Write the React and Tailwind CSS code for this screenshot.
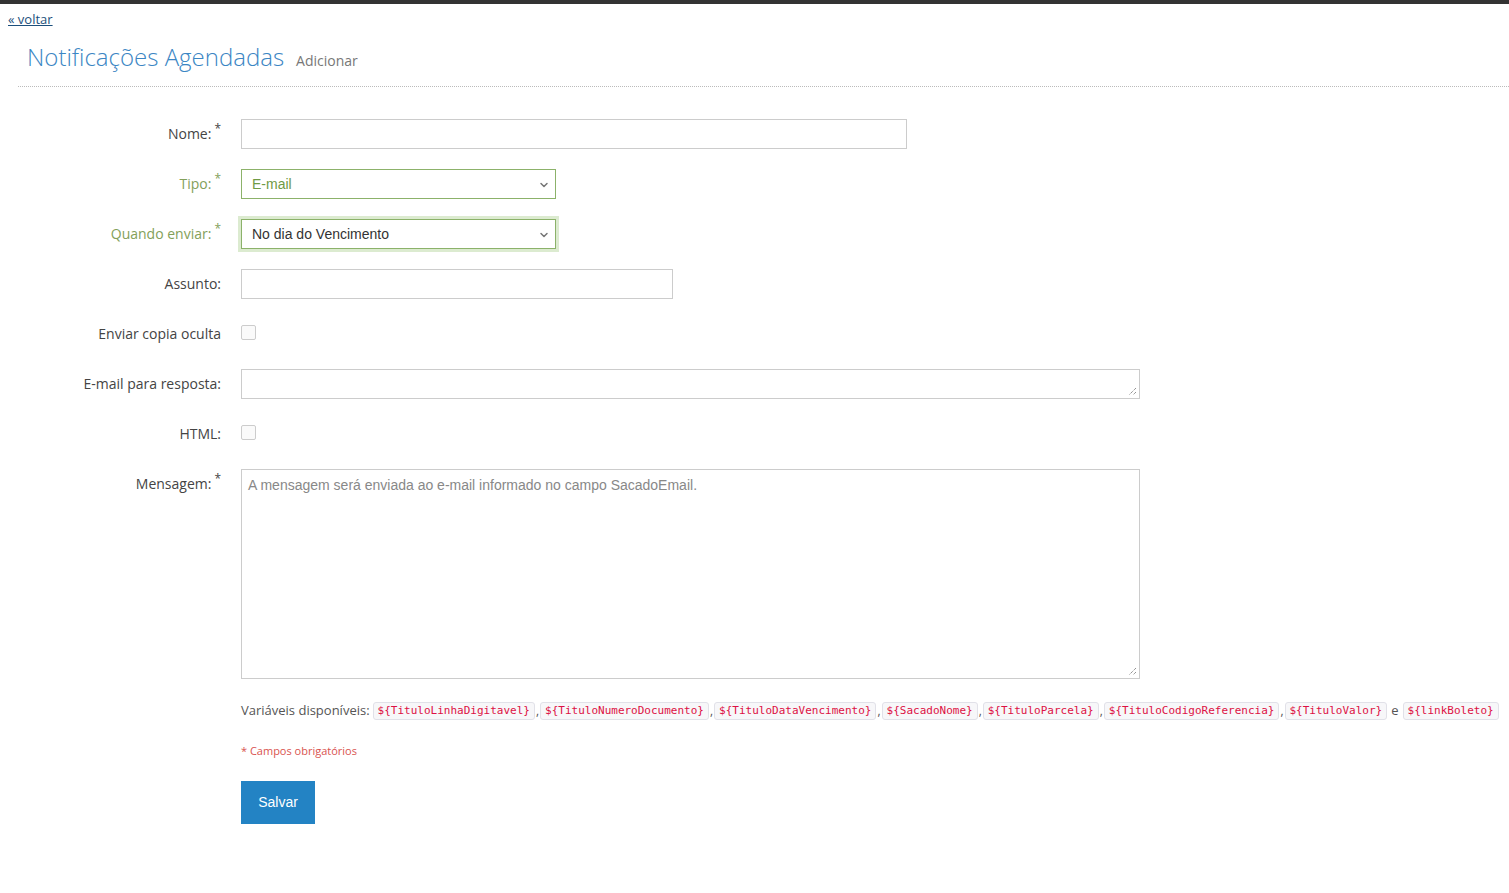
import { ChevronDown } from "lucide-react";

const vars = [
    "${TituloLinhaDigitavel}",
    "${TituloNumeroDocumento}",
    "${TituloDataVencimento}",
    "${SacadoNome}",
    "${TituloParcela}",
    "${TituloCodigoReferencia}",
    "${TituloValor}",
];

function Label({ children, required, green }) {
    return (
        <div
            className={`w-[221px] h-[30px] shrink-0 text-right text-[14px] leading-[30px] ${
                green ? "text-[#83a05a]" : "text-[#444]"
            }`}
        >
            {children}
            {required && (
                <span className="relative -top-[6px] ml-[3px] text-[12px] leading-none">*</span>
            )}
        </div>
    );
}

function Code({ children }) {
    return (
        <code className="inline-block h-[18px] px-[4px] leading-[16px] text-[11px] text-[#dd1144] bg-[#f7f7f9] border border-[#e1e1e8] rounded-[3px] font-['DejaVu_Sans_Mono',monospace]">
            {children}
        </code>
    );
}

function Select({ value, glow, greenText }) {
    return (
        <div
            className={`relative w-[315px] h-[30px] border border-[#8cb26a] bg-white flex items-center px-[10px] text-[14px] font-['Liberation_Sans',Arial,sans-serif] ${
                glow ? "shadow-[0_0_0_3px_#dcebd0]" : ""
            } ${greenText ? "text-[#6f9a45]" : "text-[#333]"}`}
        >
            {value}
            <ChevronDown
                className="absolute right-[5px] top-[9px] w-[12px] h-[12px] text-[#777]"
                strokeWidth={3}
            />
        </div>
    );
}

function Resize() {
    return (
        <svg className="absolute right-[2px] bottom-[2px]" width="9" height="9" viewBox="0 0 9 9">
            <path d="M8 1L1 8M8 5L5 8" stroke="#666" strokeWidth="1" strokeDasharray="1 1" />
        </svg>
    );
}

function Checkbox() {
    return (
        <div className="pt-[6px]">
            <div className="w-[15px] h-[15px] border border-[#ccc] rounded-[2px] bg-[#fafafa]"></div>
        </div>
    );
}

export default function App() {
    return (
        <div className="min-h-[893px] bg-white font-['Open_Sans',sans-serif]">
            <div className="h-[4px] bg-[#333]"></div>
            <div className="pl-[8px] pt-[2px]">
                <a href="#" className="text-[13px] text-[#1c4f7c] underline leading-[18px]">
                    « voltar
                </a>
            </div>
            <div className="ml-[18px] pl-[9px] pt-[7px] pb-[9px] border-b border-dotted border-[#bbb] flex items-baseline gap-[12px]">
                <h1 className="text-[24px] font-light text-[#3b86c4] leading-[40px]">
                    Notificações Agendadas
                </h1>
                <span className="text-[14px] text-[#777]">Adicionar</span>
            </div>

            <div className="pt-[32px] flex flex-col gap-[20px]">
                <div className="flex gap-[20px]">
                    <Label required>Nome:</Label>
                    <div className="w-[666px] h-[30px] border border-[#ccc]"></div>
                </div>
                <div className="flex gap-[20px]">
                    <Label required green>Tipo:</Label>
                    <Select value="E-mail" greenText />
                </div>
                <div className="flex gap-[20px]">
                    <Label required green>Quando enviar:</Label>
                    <Select value="No dia do Vencimento" glow />
                </div>
                <div className="flex gap-[20px]">
                    <Label>Assunto:</Label>
                    <div className="w-[432px] h-[30px] border border-[#ccc]"></div>
                </div>
                <div className="flex gap-[20px]">
                    <Label>Enviar copia oculta</Label>
                    <Checkbox />
                </div>
                <div className="flex gap-[20px]">
                    <Label>E-mail para resposta:</Label>
                    <div className="relative w-[899px] h-[30px] border border-[#ccc]">
                        <Resize />
                    </div>
                </div>
                <div className="flex gap-[20px]">
                    <Label>HTML:</Label>
                    <Checkbox />
                </div>
                <div className="flex gap-[20px]">
                    <Label required>Mensagem:</Label>
                    <div className="relative w-[899px] h-[210px] border border-[#ccc] px-[6px] pt-[5px] text-[14px] text-[#888] font-['Liberation_Sans',Arial,sans-serif]">
                        A mensagem será enviada ao e-mail informado no campo SacadoEmail.
                        <Resize />
                    </div>
                </div>
            </div>

            <div className="ml-[241px] mt-[22px] flex items-center whitespace-nowrap text-[13px] text-[#555]">
                <span className="mr-[3px]">Variáveis disponíveis:</span>
                {vars.map((v, i) => (
                    <span key={v} className="flex items-center">
                        <Code>{v}</Code>
                        {i < vars.length - 1 && <span className="mx-[1px] text-[12px]">,</span>}
                    </span>
                ))}
                <span className="mx-[4px]">e</span>
                <Code>{"${linkBoleto}"}</Code>
            </div>

            <div className="ml-[241px] mt-[22px] text-[11px] text-[#d9534f]">* Campos obrigatórios</div>

            <div className="ml-[241px] mt-[22px]">
                <button className="w-[74px] h-[43px] bg-[#2383c4] text-white text-[14px] font-['Liberation_Sans',Arial,sans-serif]">
                    Salvar
                </button>
            </div>
        </div>
    );
}
